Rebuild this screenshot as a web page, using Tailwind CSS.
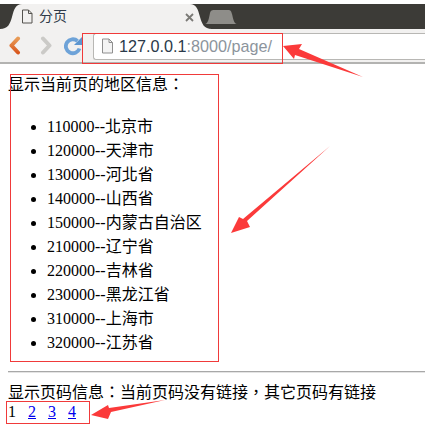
<!DOCTYPE html>
<html lang="en">
<head>
  <meta charset="UTF-8" />
  <title>分页</title>
  <script src="https://cdn.jsdelivr.net/npm/@tailwindcss/browser@4"></script>
</head>
<body class="bg-white w-[431px] h-[435px] overflow-hidden relative font-['Liberation_Serif','Noto_Sans_CJK_TC',serif] text-[16px] text-black">

  <!-- Browser chrome -->
  <div class="pt-[4px] pr-[6px] font-['Liberation_Sans','Noto_Sans_CJK_SC',sans-serif]">
    <div class="h-[25px] bg-[#3c3b37] relative flex items-end">
      <svg class="absolute left-0 top-0" width="215" height="25" viewBox="0 0 215 25">
        <path d="M0 25 C8 25 10 20 12 13 C14 5 16 0 22 0 L190 0 C196 0 198 5 200 13 C202 20 204 25 212 25 Z" fill="#f2f1f0" />
      </svg>
      <svg class="absolute left-[205px] top-[5px]" width="32" height="15" viewBox="0 0 32 15">
        <path d="M0 15 C3 15 4 9 5 4 C6 1 7 1 10 1 L23 1 C26 1 26 2 27 5 C28 9 29 15 32 15 Z" fill="#8e8d89" />
      </svg>
      <svg class="absolute left-[21px] top-[5px]" width="12" height="15" viewBox="0 0 12 15" fill="none" stroke="#55534f" stroke-width="1">
        <path d="M1.500 1h6l3.500 3.500v9.500h-9.500z" />
        <path d="M7.500 1v3.500h3.500" />
      </svg>
      <span class="absolute left-[39px] top-[3px] text-[14px] leading-[18px] text-[#2f3a48]">分页</span>
      <svg class="absolute left-[185px] top-[9px]" width="9" height="9" viewBox="0 0 9 9" stroke="#7b7a76" stroke-width="1.800">
        <path d="M1 1l7 7M8 1l-7 7" />
      </svg>
    </div>
    <div class="h-[35px] bg-[#f2f1f0] border-b-2 border-[#b3b3b1] flex items-center relative">
      <svg class="absolute left-[9px] top-[7px]" width="12" height="19" viewBox="0 0 12 19">
        <defs>
          <linearGradient id="backFill" x1="0" y1="0" x2="0" y2="1">
            <stop offset="0" stop-color="#e89a55" />
            <stop offset="1" stop-color="#d9591f" />
          </linearGradient>
        </defs>
        <path d="M2.500 9.500L9 2.500M2.500 9.500L9 16.500" fill="none" stroke="url(#backFill)" stroke-width="4" stroke-linecap="round" />
      </svg>
      <svg class="absolute left-[40px] top-[7px]" width="12" height="19" viewBox="0 0 12 19">
        <path d="M3 2.500l6.500 7-6.500 7" fill="none" stroke="#cbcac7" stroke-width="4" stroke-linecap="round" stroke-linejoin="round" />
      </svg>
      <svg class="absolute left-[64px] top-[7px]" width="19" height="20" viewBox="0 0 19 20">
        <path d="M15.500 12.500a7 7 0 1 1-2-7.500" fill="none" stroke="#6ea3d8" stroke-width="3.800" />
        <path d="M10 9h8V1z" fill="#5d96d0" />
      </svg>
      <div class="absolute left-[93px] top-[4px] right-0 h-[27px] bg-white border-y border-l border-[#b8b7b4] rounded-l-[3px] pl-[25px] text-[16.2px] leading-[25px] text-[#8c949c]">
        <span class="text-[#2b3a4a]">127.0.0.1</span>:8000/page/
      </div>
      <svg class="absolute left-[101px] top-[9px]" width="13" height="16" viewBox="0 0 13 16" fill="#f4f4f4" stroke="#8f8f8f" stroke-width="1">
        <path d="M1.500 1h6.500l3.500 3.500v10.500h-10z" />
        <path d="M8 1v3.500h3.500" fill="none" />
      </svg>
    </div>
  </div>

  <!-- Page content -->
  <div class="pl-[8px] pr-[6px] pt-[12px]">
    <div>
      <p class="leading-[18px]">显示当前页的地区信息：</p>
      <ul class="list-disc pl-[39px] mt-[21px] mb-[16px]">
        <li class="h-[24px] leading-[24px]">110000--北京市</li>
        <li class="h-[24px] leading-[24px]">120000--天津市</li>
        <li class="h-[24px] leading-[24px]">130000--河北省</li>
        <li class="h-[24px] leading-[24px]">140000--山西省</li>
        <li class="h-[24px] leading-[24px]">150000--内蒙古自治区</li>
        <li class="h-[24px] leading-[24px]">210000--辽宁省</li>
        <li class="h-[24px] leading-[24px]">220000--吉林省</li>
        <li class="h-[24px] leading-[24px]">230000--黑龙江省</li>
        <li class="h-[24px] leading-[24px]">310000--上海市</li>
        <li class="h-[24px] leading-[24px]">320000--江苏省</li>
      </ul>
    </div>
    <hr class="border-0 border-t border-b border-t-[#a8a8a8] border-b-[#e4e4e4] h-[2px] mt-[7px]" />
    <p class="mt-[11px] leading-[18px]">显示页码信息：当前页码没有链接，其它页码有链接</p>
    <div class="leading-[18px] flex gap-[12px] mt-[1px]">
      <span>1</span>
      <a href="#" class="text-[#0000ee] underline">2</a>
      <a href="#" class="text-[#0000ee] underline">3</a>
      <a href="#" class="text-[#0000ee] underline">4</a>
    </div>
  </div>

  <!-- Red annotations over the screenshot -->
  <div class="absolute left-[82px] top-[33px] w-[201px] h-[31px] border border-[#f03a3a]"></div>
  <div class="absolute left-[10px] top-[74px] w-[209px] h-[288px] border border-[#f03a3a]"></div>
  <div class="absolute left-[6px] top-[401px] w-[84px] h-[23px] border border-[#f03a3a]"></div>

  <svg class="absolute left-0 top-0 pointer-events-none" width="431" height="435" viewBox="0 0 431 435">
    <path d="M283 46 L302 44 L299 49 L363 77 L295 55 L294 59 Z" fill="#fb3a3a" />
    <path d="M330 146 L247 221 L250 227 L231 233 L239 217 L243 219 Z" fill="#fb3a3a" />
    <path d="M165 400 L111 412 L108 419 L91 415 L108 405 L109 408 Z" fill="#fb3a3a" />
  </svg>
</body>
</html>
